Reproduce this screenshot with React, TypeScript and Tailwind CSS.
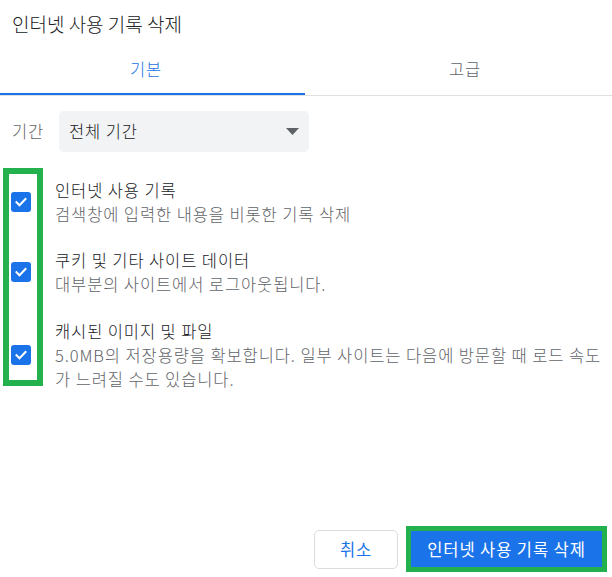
import React from 'react';

function Check() {
  return (
    <span className="flex h-[20px] w-[20px] shrink-0 items-center justify-center rounded-[3px] bg-[#1a73e8]">
      <svg width="14" height="14" viewBox="0 0 14 14" fill="none">
        <path d="M2.5 7.2l3 3L11.5 4" stroke="#fff" strokeWidth="2" strokeLinecap="square" />
      </svg>
    </span>
  );
}

const items = [
  { title: '인터넷 사용 기록', desc: ['검색창에 입력한 내용을 비롯한 기록 삭제'] },
  { title: '쿠키 및 기타 사이트 데이터', desc: ['대부분의 사이트에서 로그아웃됩니다.'] },
  {
    title: '캐시된 이미지 및 파일',
    desc: ['5.0MB의 저장용량을 확보합니다. 일부 사이트는 다음에 방문할 때 로드 속도', '가 느려질 수도 있습니다.'],
  },
];

export default function App() {
  return (
    <div className="relative flex h-[577px] w-[612px] flex-col bg-white font-['Noto_Sans_CJK_KR',sans-serif] text-[16.5px] font-light tracking-[0.9px] text-[#202124]">
      <div className="h-[45px] pl-[12px] pt-[10px] text-[19px] leading-[28px] tracking-[0px]">인터넷 사용 기록 삭제</div>

      <div className="flex border-b border-[#e0e0e0]">
        <div className="flex w-[306px] flex-col">
          <div className="flex h-[48px] items-center justify-center pr-[14px] text-[#1a73e8]">기본</div>
          <div className="h-[2px] w-[305px] bg-[#1a73e8]" />
        </div>
        <div className="flex flex-1 flex-col">
          <div className="flex h-[48px] items-center justify-center pl-[12px] text-[#5f6368]">고급</div>
          <div className="h-[2px]" />
        </div>
      </div>

      <div className="mt-[15px] flex items-center pl-[12px]">
        <span className="w-[47px] text-[#5f6368]">기간</span>
        <div className="flex h-[41px] w-[250px] items-center justify-between rounded-[5px] bg-[#f1f3f4] pl-[10px] pr-[10px]">
          <span>전체 기간</span>
          <svg width="13" height="7" viewBox="0 0 13 7">
            <path d="M0 0h13L6.5 7z" fill="#5f6368" />
          </svg>
        </div>
      </div>

      <div className="mt-[26px] flex flex-col gap-[22px]">
        {items.map((it, i) => (
          <div key={i} className={`flex items-center pl-[11px] ${i === 2 ? 'mt-[1px]' : ''}`}>
            <Check />
            <div className="ml-[24px] leading-[24px]">
              <div>{it.title}</div>
              {it.desc.map((d) => (
                <div key={d} className="whitespace-nowrap text-[#5f6368]">{d}</div>
              ))}
            </div>
          </div>
        ))}
      </div>

      <div className="pointer-events-none absolute left-[3px] top-[168px] h-[218px] w-[40px] border-[6px] border-[#22b14c]" />

      <div className="mt-auto flex items-center justify-end gap-[8px] pb-[5px] pr-[5px]">
        <button className="h-[39px] w-[84px] rounded-[5px] border border-[#dadce0] bg-white font-normal text-[#1a73e8]">
          취소
        </button>
        <div className="border-[5px] border-[#22b14c]">
          <button className="flex h-[36px] w-[191px] items-center justify-center bg-[#1a73e8] font-normal text-white">
            인터넷 사용 기록 삭제
          </button>
        </div>
      </div>
    </div>
  );
}
